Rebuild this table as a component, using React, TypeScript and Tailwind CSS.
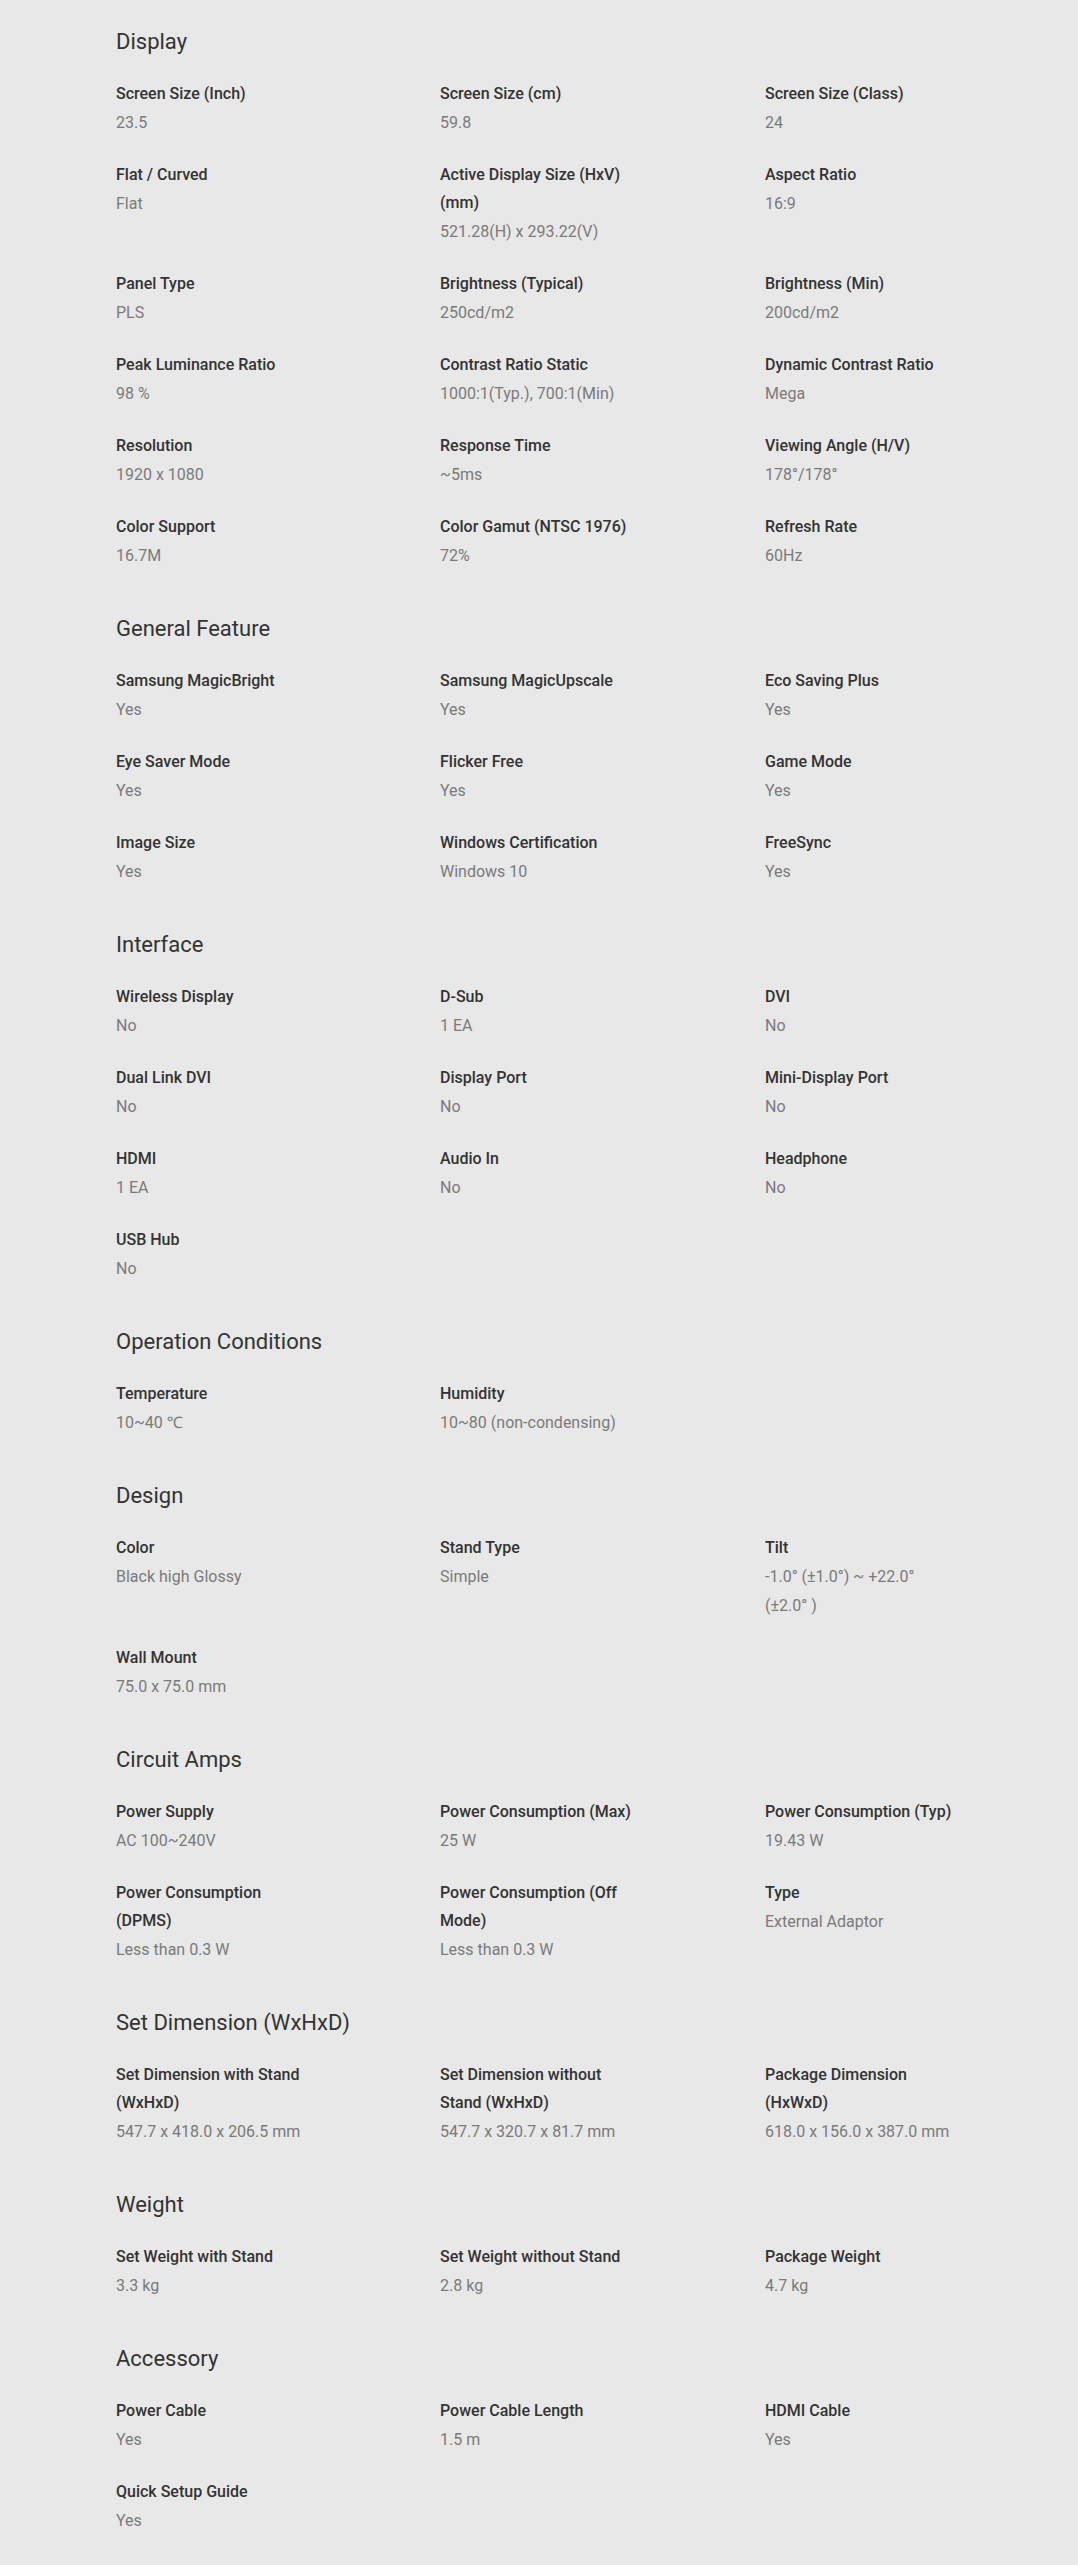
interface SpecItem {
  label: string;
  value: string;
}

interface SpecSection {
  title: string;
  items: SpecItem[];
}

// line breaks follow the original page's wrapping
const sections: SpecSection[] = [
  {
    title: 'Display',
    items: [
      { label: 'Screen Size (Inch)', value: '23.5' },
      { label: 'Screen Size (cm)', value: '59.8' },
      { label: 'Screen Size (Class)', value: '24' },
      { label: 'Flat / Curved', value: 'Flat' },
      { label: 'Active Display Size (HxV)\n(mm)', value: '521.28(H) x 293.22(V)' },
      { label: 'Aspect Ratio', value: '16:9' },
      { label: 'Panel Type', value: 'PLS' },
      { label: 'Brightness (Typical)', value: '250cd/m2' },
      { label: 'Brightness (Min)', value: '200cd/m2' },
      { label: 'Peak Luminance Ratio', value: '98 %' },
      { label: 'Contrast Ratio Static', value: '1000:1(Typ.), 700:1(Min)' },
      { label: 'Dynamic Contrast Ratio', value: 'Mega' },
      { label: 'Resolution', value: '1920 x 1080' },
      { label: 'Response Time', value: '~5ms' },
      { label: 'Viewing Angle (H/V)', value: '178°/178°' },
      { label: 'Color Support', value: '16.7M' },
      { label: 'Color Gamut (NTSC 1976)', value: '72%' },
      { label: 'Refresh Rate', value: '60Hz' },
    ],
  },
  {
    title: 'General Feature',
    items: [
      { label: 'Samsung MagicBright', value: 'Yes' },
      { label: 'Samsung MagicUpscale', value: 'Yes' },
      { label: 'Eco Saving Plus', value: 'Yes' },
      { label: 'Eye Saver Mode', value: 'Yes' },
      { label: 'Flicker Free', value: 'Yes' },
      { label: 'Game Mode', value: 'Yes' },
      { label: 'Image Size', value: 'Yes' },
      { label: 'Windows Certification', value: 'Windows 10' },
      { label: 'FreeSync', value: 'Yes' },
    ],
  },
  {
    title: 'Interface',
    items: [
      { label: 'Wireless Display', value: 'No' },
      { label: 'D-Sub', value: '1 EA' },
      { label: 'DVI', value: 'No' },
      { label: 'Dual Link DVI', value: 'No' },
      { label: 'Display Port', value: 'No' },
      { label: 'Mini-Display Port', value: 'No' },
      { label: 'HDMI', value: '1 EA' },
      { label: 'Audio In', value: 'No' },
      { label: 'Headphone', value: 'No' },
      { label: 'USB Hub', value: 'No' },
    ],
  },
  {
    title: 'Operation Conditions',
    items: [
      { label: 'Temperature', value: '10~40 ℃' },
      { label: 'Humidity', value: '10~80 (non-condensing)' },
    ],
  },
  {
    title: 'Design',
    items: [
      { label: 'Color', value: 'Black high Glossy' },
      { label: 'Stand Type', value: 'Simple' },
      { label: 'Tilt', value: '-1.0° (±1.0°) ~ +22.0°\n(±2.0° )' },
      { label: 'Wall Mount', value: '75.0 x 75.0 mm' },
    ],
  },
  {
    title: 'Circuit Amps',
    items: [
      { label: 'Power Supply', value: 'AC 100~240V' },
      { label: 'Power Consumption (Max)', value: '25 W' },
      { label: 'Power Consumption (Typ)', value: '19.43 W' },
      { label: 'Power Consumption\n(DPMS)', value: 'Less than 0.3 W' },
      { label: 'Power Consumption (Off\nMode)', value: 'Less than 0.3 W' },
      { label: 'Type', value: 'External Adaptor' },
    ],
  },
  {
    title: 'Set Dimension (WxHxD)',
    items: [
      { label: 'Set Dimension with Stand\n(WxHxD)', value: '547.7 x 418.0 x 206.5 mm' },
      { label: 'Set Dimension without\nStand (WxHxD)', value: '547.7 x 320.7 x 81.7 mm' },
      { label: 'Package Dimension\n(HxWxD)', value: '618.0 x 156.0 x 387.0 mm' },
    ],
  },
  {
    title: 'Weight',
    items: [
      { label: 'Set Weight with Stand', value: '3.3 kg' },
      { label: 'Set Weight without Stand', value: '2.8 kg' },
      { label: 'Package Weight', value: '4.7 kg' },
    ],
  },
  {
    title: 'Accessory',
    items: [
      { label: 'Power Cable', value: 'Yes' },
      { label: 'Power Cable Length', value: '1.5 m' },
      { label: 'HDMI Cable', value: 'Yes' },
      { label: 'Quick Setup Guide', value: 'Yes' },
    ],
  },
];

function SpecBlock({ section }: { section: SpecSection }) {
  return (
    <section className="mb-[44px]">
      <h2 className="text-[22px] leading-[30px] font-normal text-[#333333] mb-[23px]">
        {section.title}
      </h2>
      <div className="grid grid-cols-[324px_325px_1fr] gap-y-[24px]">
        {section.items.map(item => (
          <div key={item.label} className="w-[260px] whitespace-pre-line">
            <div className="text-[16px] leading-[28px] font-medium text-[#333333]">
              {item.label}
            </div>
            <div className="text-[16px] leading-[29px] font-normal text-[#7a7a7a]">
              {item.value}
            </div>
          </div>
        ))}
      </div>
    </section>
  );
}

export default function App() {
  return (
    <div
      className="min-h-screen bg-[#e8e8e8] pt-[27px] pl-[116px]"
      style={{ fontFamily: 'Roboto, "Noto Sans", sans-serif' }}
    >
      {sections.map(section => (
        <SpecBlock key={section.title} section={section} />
      ))}
    </div>
  );
}
